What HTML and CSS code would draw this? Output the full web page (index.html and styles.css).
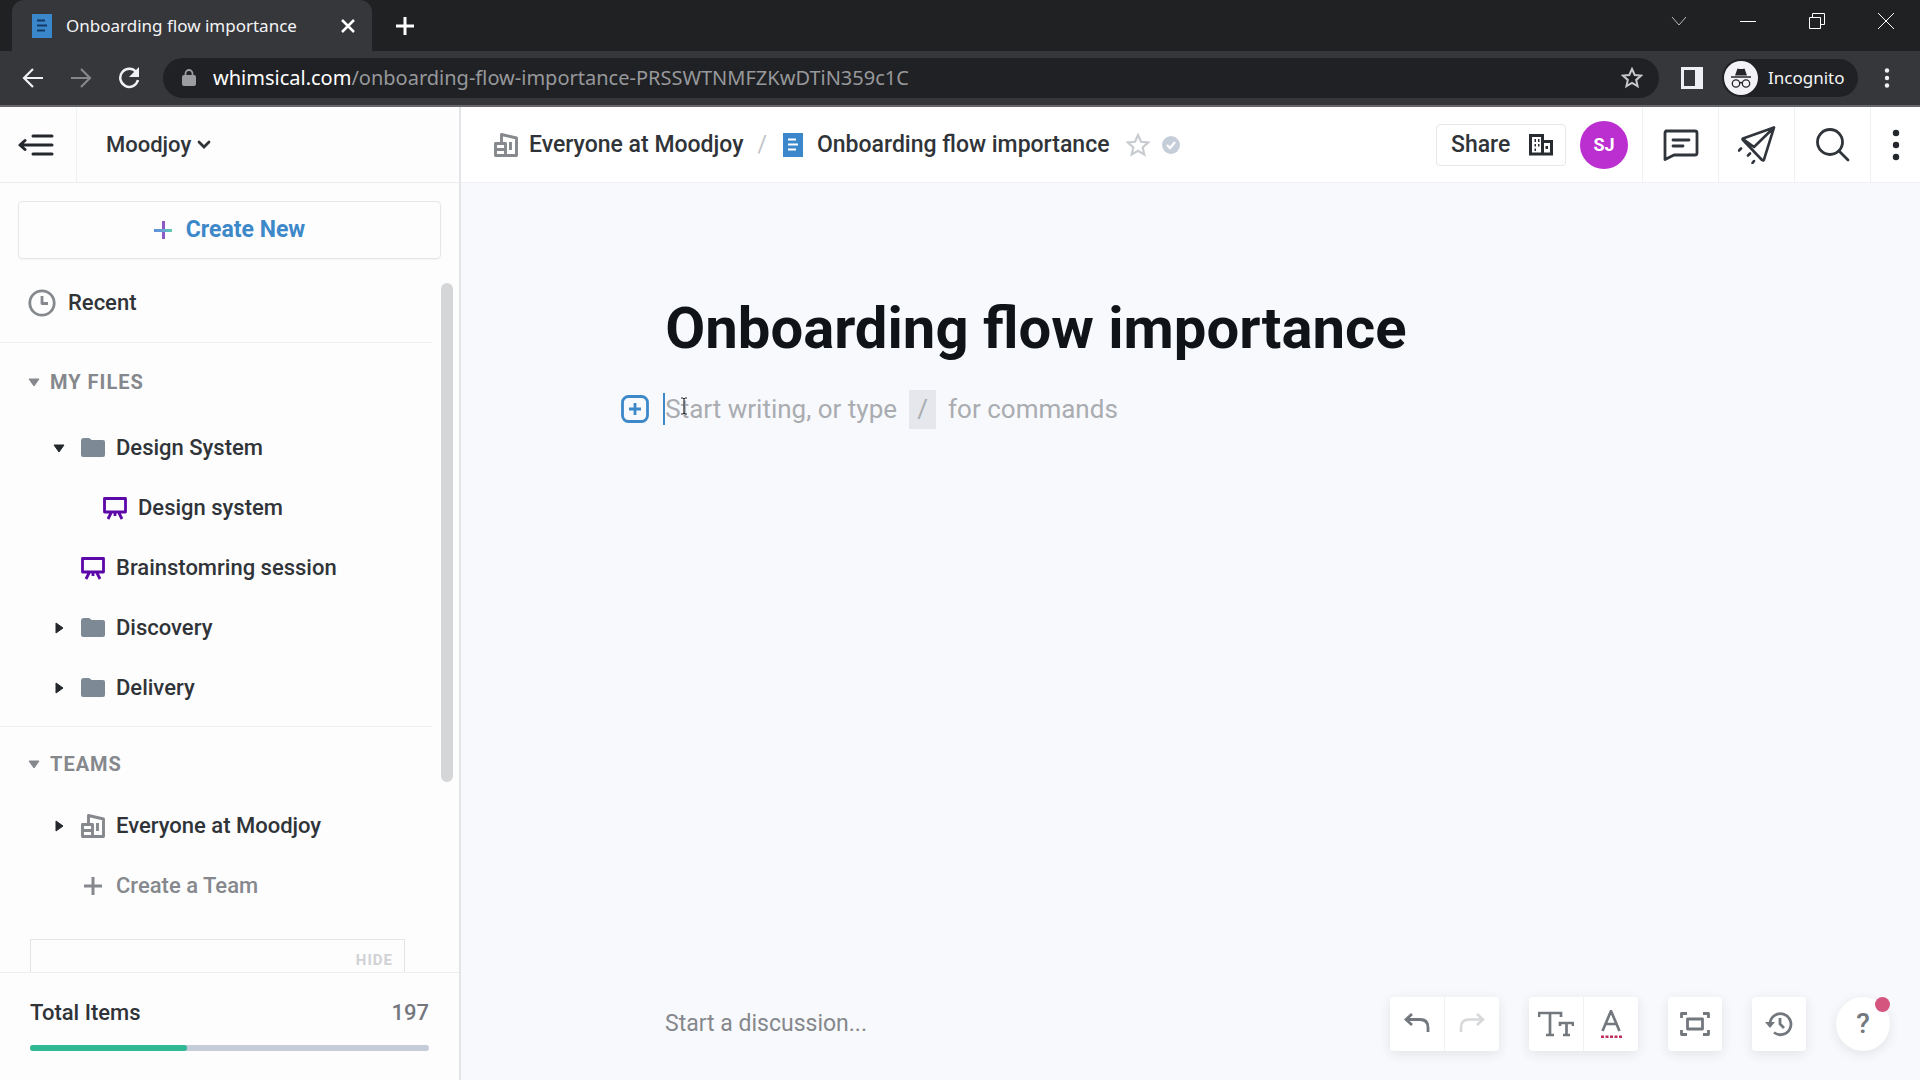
FILE: index.html
```html
<!DOCTYPE html>
<html lang="en">
<head>
<meta charset="utf-8">
<title>Onboarding flow importance</title>
<link rel="stylesheet" href="styles.css">
</head>
<body>
<svg class="defs" aria-hidden="true">
  <symbol id="folder" viewBox="0 0 24 24"><path d="M0 5a3 3 0 0 1 3-3h4.500q1 0 2 1l1 1H22a2 2 0 0 1 2 2v13a2 2 0 0 1-2 2H2a2 2 0 0 1-2-2z" fill="#7d8a95"/></symbol>
  <symbol id="board" viewBox="0 0 24 24"><path d="M1.500 2.500h21v13.500h-21zM8 17l-3 6M16 17l3 6M12 17v3" fill="none" stroke="#5c07a8" stroke-width="2.800" stroke-linejoin="round"/></symbol>
  <symbol id="team" viewBox="0 0 24 24"><path d="M7.500 10.500V1.500l15 3.500v17.500H11.500M1.500 10.500h10v12h-10zM1.500 16.500h10M16.500 9v8" fill="none" stroke="#85888c" stroke-width="2.900" stroke-linejoin="round"/></symbol>
  <symbol id="down" viewBox="0 0 12 12"><path d="M1 3h10L6 10z" fill="currentColor" stroke="currentColor" stroke-linejoin="round"/></symbol>
  <symbol id="right" viewBox="0 0 12 12"><path d="M3 1v10l7-5z" fill="currentColor" stroke="currentColor" stroke-linejoin="round"/></symbol>
  <symbol id="doc" viewBox="0 0 20 24"><path d="M0 0h20v24H0z" fill="#3a87cb"/><path d="M5 6.500h8M5 11.500h10M5 16.500h8" stroke="currentColor" stroke-width="2"/></symbol>
</svg>

<header class="browser">
  <div class="tabstrip">
    <div class="tab">
      <svg class="favicon" viewBox="0 0 20 24"><use href="#doc"/></svg>
      <span class="tab-title">Onboarding flow importance</span>
      <button class="plain" aria-label="Close tab"><svg width="14" height="14" viewBox="0 0 14 14"><path d="M1 1l12 12M13 1L1 13" stroke="#fff" stroke-width="2.500"/></svg></button>
    </div>
    <button class="plain new-tab" aria-label="New tab"><svg width="18" height="18" viewBox="0 0 18 18"><path d="M9 0v18M0 9h18" stroke="#fff" stroke-width="3"/></svg></button>
    <div class="window-controls">
      <button class="plain" aria-label="Search tabs"><svg width="16" height="16" viewBox="0 0 16 16"><path d="M1 4l7 8 7-8" fill="none" stroke="#bbb"/></svg></button>
      <button class="plain" aria-label="Minimize"><svg width="16" height="16" viewBox="0 0 16 16"><path d="M0 8.500h16" stroke="#fff"/></svg></button>
      <button class="plain" aria-label="Restore"><svg width="16" height="16" viewBox="0 0 16 16"><path d="M.5 4.500h11v11H.5zM3.500 4.500v-4h12v11h-4" fill="none" stroke="#fff"/></svg></button>
      <button class="plain" aria-label="Close"><svg width="16" height="16" viewBox="0 0 16 16"><path d="M0 0l16 16M16 0L0 16" stroke="#fff"/></svg></button>
    </div>
  </div>
  <div class="toolbar">
    <nav class="nav-buttons">
      <button class="plain" aria-label="Back"><svg width="22" height="22" viewBox="0 0 22 22"><path d="M21 11H2M11 2l-9 9 9 9" fill="none" stroke="#f1f1f3" stroke-width="2.200"/></svg></button>
      <button class="plain" aria-label="Forward"><svg width="22" height="22" viewBox="0 0 22 22"><path d="M1 11h19M11 2l9 9-9 9" fill="none" stroke="#86878a" stroke-width="2.200"/></svg></button>
      <button class="plain" aria-label="Reload"><svg width="22" height="22" viewBox="0 0 22 22"><path d="M18.500 5.500A9 9 0 1 0 20 13" fill="none" stroke="#f1f1f3" stroke-width="2.500"/><path d="M21 0v10H11z" fill="#f1f1f3"/></svg></button>
    </nav>
    <div class="address">
      <svg width="14" height="18" viewBox="0 0 14 18"><rect y="6" width="14" height="11" rx="2" fill="#9c9da1"/><path d="M3.500 7V4.500a3.500 3.500 0 0 1 7 0V7" fill="none" stroke="#9c9da1" stroke-width="1.800"/></svg>
      <span class="url"><b>whimsical.com</b>/onboarding-flow-importance-PRSSWTNMFZKwDTiN359c1C</span>
      <button class="plain" aria-label="Bookmark"><svg width="22" height="22" viewBox="0 0 22 22"><path d="M11 2l2.700 6 6.300.6-4.800 4.300 1.400 6.300L11 16l-5.600 3.200 1.400-6.300L2 8.600 8.300 8z" fill="none" stroke="#c6c7ca" stroke-width="2"/></svg></button>
    </div>
    <button class="plain" aria-label="Side panel"><svg width="22" height="22" viewBox="0 0 22 22"><path d="M0 0h22v22H0z" fill="#eeeef5"/><path d="M3 3h11v16H3z" fill="#36373b"/></svg></button>
    <button class="incognito"><svg width="34" height="34" viewBox="0 0 34 34"><circle cx="17" cy="17" r="17" fill="#f3f3f7"/><path d="M13.500 7.500q3.500 1 7 0l2.500 7H11z" fill="#242528"/><path d="M7 16h20" stroke="#242528" stroke-width="1.500"/><g fill="none" stroke="#242528" stroke-width="1.300"><circle cx="12" cy="22.500" r="3.700"/><circle cx="22" cy="22.500" r="3.700"/><path d="M15.500 22q1.500-1 3 0"/></g></svg>Incognito</button>
    <button class="plain" aria-label="Browser menu"><svg width="6" height="20" viewBox="0 0 6 20" fill="#f1f1f3"><circle cx="3" cy="2.500" r="2.200"/><circle cx="3" cy="10" r="2.200"/><circle cx="3" cy="17.500" r="2.200"/></svg></button>
  </div>
</header>

<div class="app">
  <aside class="sidebar">
    <div class="side-head">
      <button class="collapse" aria-label="Collapse sidebar"><svg width="36" height="24" viewBox="0 0 36 24"><path d="M15 3h19M2 12h32M15 21h19M7 7.500L2 12l5 4.500" fill="none" stroke="#24272c" stroke-width="3" stroke-linecap="round" stroke-linejoin="round"/></svg></button>
      <button class="workspace">Moodjoy<svg width="14" height="12" viewBox="0 0 14 12"><path d="M2 3l5 5 5-5" fill="none" stroke="#303438" stroke-width="2.800" stroke-linecap="round"/></svg></button>
    </div>
    <div class="create-wrap">
      <button class="create-new"><svg width="18" height="18" viewBox="0 0 18 18"><defs><linearGradient id="h"><stop stop-color="#5a8fd6"/><stop offset=".5" stop-color="#6aa0d8"/><stop offset="1" stop-color="#5bd0a8"/></linearGradient></defs><path d="M8 0h3v18H8z" fill="#8c5cc4"/><path d="M0 8h18v3H0z" fill="url(#h)"/></svg>Create New</button>
    </div>
    <div class="side-scroll">
      <nav class="tree">
        <section class="recent"><a href="#recent"><svg width="28" height="28" viewBox="0 0 28 28" fill="none" stroke="#85888c" stroke-width="2.800"><circle cx="14" cy="14" r="12.200"/><path d="M14 7v7.500h6" stroke-linejoin="round"/></svg>Recent</a></section>
        <section class="files">
          <h2><svg class="tri"><use href="#down"/></svg>MY FILES</h2>
          <a href="#f1"><svg class="tri"><use href="#down"/></svg><svg class="ico"><use href="#folder"/></svg>Design System</a>
          <a href="#f2" class="nested"><svg class="ico"><use href="#board"/></svg>Design system</a>
          <a href="#f3"><span class="tri"></span><svg class="ico"><use href="#board"/></svg>Brainstomring session</a>
          <a href="#f4"><svg class="tri"><use href="#right"/></svg><svg class="ico"><use href="#folder"/></svg>Discovery</a>
          <a href="#f5"><svg class="tri"><use href="#right"/></svg><svg class="ico"><use href="#folder"/></svg>Delivery</a>
        </section>
        <section class="teams">
          <h2><svg class="tri"><use href="#down"/></svg>TEAMS</h2>
          <a href="#t1"><svg class="tri"><use href="#right"/></svg><svg class="ico"><use href="#team"/></svg>Everyone at Moodjoy</a>
          <a href="#t2" class="muted"><span class="tri"></span><svg class="ico" viewBox="0 0 24 24"><path d="M12 3v18M3 12h18" stroke="#85888c" stroke-width="3"/></svg>Create a Team</a>
        </section>
        <div class="tip"><button>HIDE</button></div>
      </nav>
      <div class="scroll-thumb"></div>
    </div>
    <div class="usage">
      <div class="usage-row"><label for="items">Total Items</label><span>197</span></div>
      <progress id="items" value="197" max="500"></progress>
    </div>
  </aside>

  <main class="main">
    <header class="doc-head">
      <nav class="crumbs">
        <a href="#team"><svg class="ico"><use href="#team"/></svg>Everyone at Moodjoy</a>
        <span class="sep">/</span>
        <a href="#doc-page" class="current"><svg class="doc-icon"><use href="#doc"/></svg>Onboarding flow importance</a>
        <button class="plain star" aria-label="Favourite"><svg width="24" height="24" viewBox="0 0 24 24"><path d="M12 2l3 6.800 7 .7-5.300 4.900 1.600 7.100L12 17.800l-6.300 3.700 1.600-7.100L2 9.500l7-.7z" fill="none" stroke="#c8cbd0" stroke-width="2.200"/></svg></button>
        <svg width="18" height="18" viewBox="0 0 18 18"><circle cx="9" cy="9" r="9" fill="#c5ced8"/><path d="M5 9l3 3 5-6" fill="none" stroke="#fff" stroke-width="2.200"/></svg>
      </nav>
      <div class="actions">
        <button class="share">Share<svg width="24" height="22" viewBox="0 0 24 22"><path d="M1.500 1.500h12v18.500h-12zM13.500 7.500h9V20h-9" fill="none" stroke="#282c30" stroke-width="3"/><path d="M5.500 5h1.500v3H5.500zM9 5h1.500v3H9zM5.500 10h1.500v2.500H5.500zM9 10h1.500v2.500H9zM5.500 14.500h1.500V17H5.500zM16.500 12h2.500v3h-2.500z" fill="#282c30"/></svg></button>
        <span class="avatar">SJ</span>
        <button class="act" aria-label="Comments"><svg width="38" height="34" viewBox="0 0 38 34"><path d="M4 3h29q2 0 2 2v20q0 2-2 2H12l-9 4.500V5q0-2 2-2zM11 12h16M11 18h10" fill="none" stroke="#30353b" stroke-width="2.800" stroke-linecap="round" stroke-linejoin="round"/></svg></button>
        <button class="act" aria-label="Send"><svg width="38" height="38" viewBox="0 0 38 38"><path d="M36 1.500L5 12.500q-1 .5 0 1.500l19 20q1.500 1 2-.5zM36 1.500L16 21M5 13l11 8M3 22.500l-2 2M12 27.500l-2 2M16 35l-1.500 2" fill="none" stroke="#30353b" stroke-width="2.600" stroke-linecap="round" stroke-linejoin="round"/></svg></button>
        <button class="act" aria-label="Search"><svg width="34" height="34" viewBox="0 0 34 34"><circle cx="14" cy="14" r="12.500" fill="none" stroke="#30353b" stroke-width="2.800"/><path d="M23 23l9 9" stroke="#30353b" stroke-width="2.800" stroke-linecap="round"/></svg></button>
        <button class="act more" aria-label="More"><svg width="8" height="32" viewBox="0 0 8 32" fill="#24272c"><circle cx="4" cy="4" r="3.200"/><circle cx="4" cy="16" r="3.200"/><circle cx="4" cy="28" r="3.200"/></svg></button>
      </div>
    </header>
    <article class="page">
      <h1>Onboarding flow importance</h1>
      <div class="line">
        <button class="plain insert" aria-label="Insert block"><svg width="28" height="28" viewBox="0 0 28 28" fill="none" stroke="#3c88c9" stroke-width="2.800"><rect x="1.500" y="1.500" width="25" height="25" rx="6"/><path d="M14 8v12M8 14h12"/></svg></button>
        <div class="prompt" contenteditable="true">Start writing, or type<kbd>/</kbd>for commands</div>
        <svg class="pointer" width="8" height="18" viewBox="0 0 8 18"><path d="M1 1h2l1 1 1-1h2M4 2v14M1 17h2l1-1 1 1h2" fill="none" stroke="#222"/></svg>
      </div>
    </article>
    <footer class="doc-foot">
      <input class="discuss" type="text" aria-label="Discussion" placeholder="Start a discussion...">
      <div class="tools">
        <div class="group">
          <button aria-label="Undo"><svg width="26" height="24" viewBox="0 0 26 24"><path d="M8 2L2 7.500 8 13M2 7.500h14q8 0 8 8V20" fill="none" stroke="#73787e" stroke-width="2.800"/></svg></button>
          <button aria-label="Redo"><svg width="26" height="24" viewBox="0 0 26 24"><path d="M18 2l6 5.500-6 5.500M24 7.500H10q-8 0-8 8V20" fill="none" stroke="#d6d8da" stroke-width="2.600"/></svg></button>
        </div>
        <div class="group">
          <button aria-label="Text style"><svg width="36" height="26" viewBox="0 0 36 26"><path d="M1 6V2h22v4M12 2v22M8 24h8M22 15v-3h13v3M28.500 12v12M25 24h7" fill="none" stroke="#73787e" stroke-width="2.700"/></svg></button>
          <button aria-label="Text colour"><svg width="22" height="28" viewBox="0 0 22 28"><path d="M2.500 21L11 1l8.500 20M6 14h10" fill="none" stroke="#73787e" stroke-width="2.700" stroke-linejoin="round"/><path d="M1 27h21" stroke="#bc2d61" stroke-width="3" stroke-dasharray="3 1.500"/></svg></button>
        </div>
        <div class="group"><button aria-label="Fit to screen"><svg width="30" height="24" viewBox="0 0 30 24"><path d="M7 1.500H1.500V6M23 1.500h5.500V6M7 22.500H1.500V18M23 22.500h5.500V18M7.500 7h15v10h-15z" fill="none" stroke="#73787e" stroke-width="2.800" stroke-linejoin="round"/></svg></button></div>
        <div class="group"><button aria-label="History"><svg width="28" height="26" viewBox="0 0 28 26"><path d="M5 12A10.500 10.500 0 1 1 9 21.500" fill="none" stroke="#73787e" stroke-width="2.800"/><path d="M0 11h10l-5 6z" fill="#73787e"/><path d="M15 7v6l4 4" fill="none" stroke="#73787e" stroke-width="2.800"/></svg></button></div>
        <button class="help">?<span class="dot"></span></button>
      </div>
    </footer>
  </main>
</div>
</body>
</html>
```
FILE: styles.css
```css
* { box-sizing: border-box; }
body {
  margin: 0;
  height: 100vh;
  display: flex;
  flex-direction: column;
  overflow: hidden;
  font-family: Roboto, "Liberation Sans", sans-serif;
  font-size: 22px;
  line-height: 28px;
  color: #303438;
}
button, input { font: inherit; color: inherit; margin: 0; }
button { cursor: pointer; background: none; border: 0; padding: 0; }
a { color: inherit; text-decoration: none; }
svg { display: block; flex: none; }
.defs { position: absolute; width: 0; height: 0; }
.plain { display: flex; align-items: center; justify-content: center; }

/* Browser chrome */
.browser {
  flex: none;
  background: #36373b;
  border-bottom: 2px solid #66676b;
  font-family: "Noto Sans", "Open Sans", sans-serif;
  color: #f4f4f6;
}
.tabstrip { display: flex; align-items: stretch; height: 51px; background: #202123; padding-left: 12px; }
.tab {
  display: flex;
  align-items: center;
  width: 360px;
  padding: 0 17px 0 20px;
  border-radius: 12px 12px 0 0;
  background: #36373b;
  font-size: 17px;
}
.favicon { width: 20px; height: 24px; color: #143a66; }
.tab-title { flex: 1; margin-left: 14px; white-space: nowrap; }
.new-tab { width: 66px; }
.window-controls { display: flex; margin-left: auto; height: 42px; }
.window-controls .plain { width: 69px; }
.toolbar { display: flex; align-items: center; height: 54px; padding-right: 30px; }
.nav-buttons { display: flex; gap: 26px; padding: 0 23px 0 22px; }
.address {
  flex: 1;
  display: flex;
  align-items: center;
  height: 40px;
  padding: 0 16px 0 19px;
  border-radius: 20px;
  background: #202124;
}
.url { flex: 1; margin-left: 17px; font-size: 20px; color: #97989b; white-space: nowrap; }
.url b { font-weight: 400; color: #fff; }
.toolbar > .plain:nth-of-type(1) { margin: 0 19px 0 22px; }
.incognito {
  display: flex;
  align-items: center;
  gap: 10px;
  height: 38px;
  width: 136px;
  margin-right: 26px;
  padding: 0 2px;
  border-radius: 19px;
  background: #202124;
  font-size: 17px;
}

/* Layout */
.app { flex: 1; min-height: 0; display: flex; }
.sidebar {
  flex: none;
  display: flex;
  flex-direction: column;
  width: 461px;
  border-right: 2px solid #e2e4e7;
  background: #fdfdfe;
  font-weight: 500;
}
.side-head { flex: none; display: flex; height: 76px; border-bottom: 1px solid #ebecee; }
.collapse { display: flex; align-items: center; width: 77px; padding-left: 18px; border-right: 1px solid #f0f1f3; }
.workspace { display: flex; align-items: center; gap: 6px; padding-left: 29px; font-weight: 500; }
.create-wrap { flex: none; padding: 18px 18px 0; }
.create-new {
  display: flex;
  align-items: center;
  justify-content: center;
  gap: 14px;
  width: 100%;
  height: 58px;
  border: 1px solid #e5e7ea;
  border-radius: 4px;
  box-shadow: 0 1px 2px #0000000a;
  color: #3c88c9;
  font-size: 23px;
  font-weight: 700;
}
.side-scroll { flex: 1; min-height: 0; display: flex; margin-top: 14px; overflow: hidden; }
.tree { flex: none; width: 432px; }
.tree a { display: flex; align-items: center; height: 60px; padding-left: 53px; }
.tree .nested { padding-left: 103px; }
.tree .recent a { height: 59px; padding-left: 28px; gap: 12px; }
.recent { padding-bottom: 10px; border-bottom: 1px solid #eff0f2; }
.files, .teams { padding-top: 9px; }
.files { padding-bottom: 8px; border-bottom: 1px solid #eff0f2; }
.tree h2 {
  display: flex;
  align-items: center;
  gap: 10px;
  height: 60px;
  margin: 0;
  padding-left: 28px;
  font-size: 20px;
  font-weight: 700;
  letter-spacing: 1px;
  color: #85888c;
}
.files h2 { margin-bottom: 6px; }
.teams h2 { margin-bottom: 2px; }
.teams { padding-top: 7px; }
.tri { width: 12px; height: 12px; color: #24272c; }
h2 .tri { color: #85888c; }
.ico { width: 24px; height: 24px; margin-right: 11px; }
.tree a .tri + .ico { margin-left: 16px; }
.tree .muted { color: #85888c; }
.tip { display: flex; justify-content: flex-end; align-items: flex-start; height: 160px; margin: 23px 27px 0 30px; padding: 10px 11px; border: 1px solid #e2e4e7; }
.tip button { font-size: 15px; line-height: 20px; font-weight: 700; letter-spacing: 1px; color: #d0d2d5; }
.scroll-thumb { width: 12px; height: 499px; margin: 10px 0 0 9px; border-radius: 6px; background: #d4d6d8; }
.usage { flex: none; height: 108px; padding: 26px 30px 0; border-top: 1px solid #eceef0; }
.usage-row { display: flex; justify-content: space-between; }
.usage-row span { color: #74787d; }
.usage progress { display: block; width: 100%; height: 6px; margin-top: 18px; border: 0; appearance: none; }
.usage progress::-webkit-progress-bar { background: #c5ced8; border-radius: 3px; }
.usage progress::-webkit-progress-value { background: #30b893; border-radius: 3px; }

/* Document */
.main { flex: 1; min-width: 0; display: flex; flex-direction: column; background: #f8f9fc; }
.doc-head {
  flex: none;
  display: flex;
  justify-content: space-between;
  height: 76px;
  border-bottom: 1px solid #eef0f3;
  background: #fff;
  font-weight: 500;
}
.crumbs { display: flex; align-items: center; padding-left: 33px; font-size: 23px; white-space: nowrap; }
.crumbs a { display: flex; align-items: center; }
.sep { margin: 0 16px 0 14px; color: #c0c3c7; font-weight: 400; }
.doc-icon { width: 20px; height: 24px; margin-right: 14px; color: #fff; }
.star { margin: 0 12px 0 16px; }
.actions { display: flex; align-items: center; }
.share {
  display: flex;
  align-items: center;
  justify-content: space-between;
  width: 130px;
  height: 42px;
  padding: 0 12px 0 14px;
  border: 1px solid #e5e7ea;
  border-radius: 4px;
  font-size: 23px;
  font-weight: 500;
}
.avatar {
  display: flex;
  align-items: center;
  justify-content: center;
  width: 48px;
  height: 48px;
  margin: 0 14px;
  border-radius: 50%;
  background: #bb2fd0;
  color: #fff;
  font-size: 18px;
  font-weight: 700;
}
.act { display: flex; align-items: center; justify-content: center; width: 76px; height: 100%; border-left: 1px solid #eff0f3; }
.more { width: 50px; }
.page { flex: 1; width: 1051px; max-width: 72%; margin: 0 auto; padding-top: 105px; }
h1 { margin: 0; font-size: 58px; line-height: 80px; font-weight: 700; color: #101418; white-space: nowrap; }
.line { position: relative; display: flex; align-items: center; margin: 21px 0 0 -44px; height: 40px; }
.prompt {
  display: flex;
  align-items: center;
  margin-left: 14px;
  border-left: 2px solid #3c88c9;
  height: 32px;
  font-size: 26px;
  color: #a9acb1;
  white-space: nowrap;
}
kbd { width: 27px; margin: 0 12px; background: #e5e7ec; font: inherit; line-height: 39px; text-align: center; }
.pointer { position: absolute; left: 59px; top: 8px; }
.doc-foot {
  flex: none;
  display: flex;
  justify-content: space-between;
  align-items: center;
  padding: 0 30px 29px 204px;
}
.discuss { width: 400px; padding: 0; border: 0; background: none; font-size: 23px; outline: 0; }
.discuss::placeholder { color: #85888c; }
.tools { display: flex; gap: 30px; }
.group { display: flex; border-radius: 4px; background: #fff; box-shadow: 0 3px 12px #1e28321a; }
.group button { display: flex; align-items: center; justify-content: center; width: 54px; height: 54px; }
.group button + button { border-left: 1px solid #f0f1f3; width: 55px; }
.help {
  position: relative;
  width: 54px;
  height: 54px;
  border-radius: 50%;
  background: #fff;
  box-shadow: 0 3px 12px #1e28321a;
  font-size: 28px;
  font-weight: 500;
  color: #73787e;
}
.dot { position: absolute; top: 0; right: 0; width: 15px; height: 15px; border-radius: 50%; background: #d4567f; }
```
